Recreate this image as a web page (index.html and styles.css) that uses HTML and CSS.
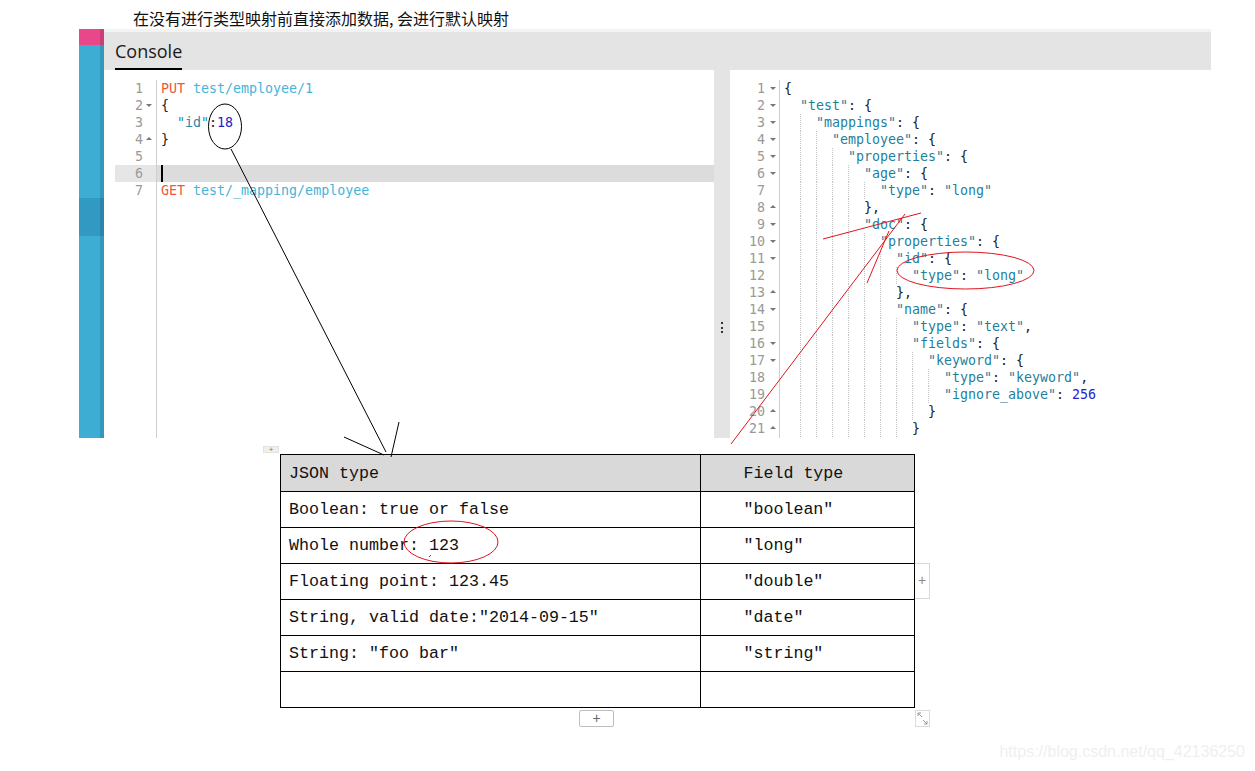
FILE: index.html
```html
<!DOCTYPE html>
<html lang="zh">
<head>
<meta charset="utf-8">
<title>Console</title>
<link rel="stylesheet" href="styles.css">
</head>
<body>
<div class="page">
  <div class="title">在没有进行类型映射前直接添加数据, 会进行默认映射</div>

  <div class="app">
    <div class="sidebar">
      <div class="sb-pink"></div>
      <div class="sb-blue sb-top"></div>
      <div class="sb-dark"></div>
      <div class="sb-blue sb-rest"></div>
    </div>
    <div class="content">
      <div class="header">
        <div class="tab">Console</div>
      </div>
      <div class="editors">
        <div class="editor left">
          <div class="gutter">
            <div class="ln">1</div>
            <div class="ln open">2</div>
            <div class="ln">3</div>
            <div class="ln close">4</div>
            <div class="ln">5</div>
            <div class="ln active">6</div>
            <div class="ln">7</div>
          </div>
          <div class="code">
            <div class="cl"><span class="m">PUT</span> <span class="u">test/employee/1</span></div>
            <div class="cl"><span class="p">{</span></div>
            <div class="cl"><span class="i"></span><span class="k">"id"</span><span class="p">:</span><span class="n">18</span></div>
            <div class="cl"><span class="p">}</span></div>
            <div class="cl"></div>
            <div class="cl active"><span class="cursor"></span></div>
            <div class="cl"><span class="m">GET</span> <span class="u">test/_mapping/employee</span></div>
          </div>
        </div>
        <div class="divider">
          <div class="grip"><span></span><span></span><span></span></div>
        </div>
        <div class="editor right">
          <div class="gutter">
            <div class="ln open">1</div>
            <div class="ln open">2</div>
            <div class="ln open">3</div>
            <div class="ln open">4</div>
            <div class="ln open">5</div>
            <div class="ln open">6</div>
            <div class="ln">7</div>
            <div class="ln close">8</div>
            <div class="ln open">9</div>
            <div class="ln open">10</div>
            <div class="ln open">11</div>
            <div class="ln">12</div>
            <div class="ln close">13</div>
            <div class="ln open">14</div>
            <div class="ln">15</div>
            <div class="ln open">16</div>
            <div class="ln open">17</div>
            <div class="ln">18</div>
            <div class="ln">19</div>
            <div class="ln close">20</div>
            <div class="ln close">21</div>
          </div>
          <div class="code">
            <div class="cl"><span class="p">{</span></div>
            <div class="cl"><span class="i"></span><span class="s">"test"</span><span class="p">: {</span></div>
            <div class="cl"><span class="i"></span><span class="g"></span><span class="s">"mappings"</span><span class="p">: {</span></div>
            <div class="cl"><span class="i"></span><span class="g"></span><span class="g"></span><span class="s">"employee"</span><span class="p">: {</span></div>
            <div class="cl"><span class="i"></span><span class="g"></span><span class="g"></span><span class="g"></span><span class="s">"properties"</span><span class="p">: {</span></div>
            <div class="cl"><span class="i"></span><span class="g"></span><span class="g"></span><span class="g"></span><span class="g"></span><span class="s">"age"</span><span class="p">: {</span></div>
            <div class="cl"><span class="i"></span><span class="g"></span><span class="g"></span><span class="g"></span><span class="g"></span><span class="g"></span><span class="s">"type"</span><span class="p">: </span><span class="s">"long"</span></div>
            <div class="cl"><span class="i"></span><span class="g"></span><span class="g"></span><span class="g"></span><span class="g"></span><span class="p">},</span></div>
            <div class="cl"><span class="i"></span><span class="g"></span><span class="g"></span><span class="g"></span><span class="g"></span><span class="s">"doc"</span><span class="p">: {</span></div>
            <div class="cl"><span class="i"></span><span class="g"></span><span class="g"></span><span class="g"></span><span class="g"></span><span class="g"></span><span class="s">"properties"</span><span class="p">: {</span></div>
            <div class="cl"><span class="i"></span><span class="g"></span><span class="g"></span><span class="g"></span><span class="g"></span><span class="g"></span><span class="g"></span><span class="s">"id"</span><span class="p">: {</span></div>
            <div class="cl"><span class="i"></span><span class="g"></span><span class="g"></span><span class="g"></span><span class="g"></span><span class="g"></span><span class="g"></span><span class="g"></span><span class="s">"type"</span><span class="p">: </span><span class="s">"long"</span></div>
            <div class="cl"><span class="i"></span><span class="g"></span><span class="g"></span><span class="g"></span><span class="g"></span><span class="g"></span><span class="g"></span><span class="p">},</span></div>
            <div class="cl"><span class="i"></span><span class="g"></span><span class="g"></span><span class="g"></span><span class="g"></span><span class="g"></span><span class="g"></span><span class="s">"name"</span><span class="p">: {</span></div>
            <div class="cl"><span class="i"></span><span class="g"></span><span class="g"></span><span class="g"></span><span class="g"></span><span class="g"></span><span class="g"></span><span class="g"></span><span class="s">"type"</span><span class="p">: </span><span class="s">"text"</span><span class="p">,</span></div>
            <div class="cl"><span class="i"></span><span class="g"></span><span class="g"></span><span class="g"></span><span class="g"></span><span class="g"></span><span class="g"></span><span class="g"></span><span class="s">"fields"</span><span class="p">: {</span></div>
            <div class="cl"><span class="i"></span><span class="g"></span><span class="g"></span><span class="g"></span><span class="g"></span><span class="g"></span><span class="g"></span><span class="g"></span><span class="g"></span><span class="s">"keyword"</span><span class="p">: {</span></div>
            <div class="cl"><span class="i"></span><span class="g"></span><span class="g"></span><span class="g"></span><span class="g"></span><span class="g"></span><span class="g"></span><span class="g"></span><span class="g"></span><span class="g"></span><span class="s">"type"</span><span class="p">: </span><span class="s">"keyword"</span><span class="p">,</span></div>
            <div class="cl"><span class="i"></span><span class="g"></span><span class="g"></span><span class="g"></span><span class="g"></span><span class="g"></span><span class="g"></span><span class="g"></span><span class="g"></span><span class="g"></span><span class="s">"ignore_above"</span><span class="p">: </span><span class="n">256</span></div>
            <div class="cl"><span class="i"></span><span class="g"></span><span class="g"></span><span class="g"></span><span class="g"></span><span class="g"></span><span class="g"></span><span class="g"></span><span class="g"></span><span class="p">}</span></div>
            <div class="cl"><span class="i"></span><span class="g"></span><span class="g"></span><span class="g"></span><span class="g"></span><span class="g"></span><span class="g"></span><span class="g"></span><span class="p">}</span></div>
          </div>
        </div>
      </div>
    </div>
  </div>

  <div class="table-wrap">
    <div class="handle"><span>+</span></div>
    <table class="types">
      <tr class="head"><td class="c1">JSON type</td><td class="c2">Field type</td></tr>
      <tr><td class="c1">Boolean: true or false</td><td class="c2">"boolean"</td></tr>
      <tr><td class="c1">Whole number: 123</td><td class="c2">"long"</td></tr>
      <tr><td class="c1">Floating point: 123.45</td><td class="c2">"double"</td></tr>
      <tr><td class="c1">String, valid date:"2014-09-15"</td><td class="c2">"date"</td></tr>
      <tr><td class="c1">String: "foo bar"</td><td class="c2">"string"</td></tr>
      <tr><td class="c1"></td><td class="c2"></td></tr>
    </table>
    <div class="add-col">+</div>
    <div class="add-row">+</div>
    <div class="resize">
      <svg width="13" height="15" viewBox="0 0 13 15">
        <path d="M2 2 L6 6 M2 2 L2 5 M2 2 L5 2" stroke="#999" stroke-width="1" fill="none"/>
        <path d="M11 13 L7 9 M11 13 L11 10 M11 13 L8 13" stroke="#999" stroke-width="1" fill="none"/>
      </svg>
    </div>
  </div>

  <div class="watermark">https://blog.csdn.net/qq_42136250</div>

  <svg class="annot" width="1255" height="771" viewBox="0 0 1255 771">
    <ellipse cx="225" cy="126.5" rx="16.5" ry="22.5" fill="none" stroke="#000" stroke-width="1"/>
    <line x1="231" y1="149" x2="386" y2="452" stroke="#000" stroke-width="1"/>
    <line x1="344" y1="437" x2="384" y2="455" stroke="#000" stroke-width="1"/>
    <line x1="399" y1="422" x2="391" y2="457" stroke="#000" stroke-width="1"/>
    <ellipse cx="965.5" cy="270.5" rx="68.5" ry="18.5" fill="none" stroke="#e0141e" stroke-width="1"/>
    <ellipse cx="451" cy="542" rx="47" ry="21" fill="none" stroke="#e0141e" stroke-width="1"/>
    <line x1="823" y1="239" x2="921" y2="213" stroke="#e0141e" stroke-width="1"/>
    <line x1="905" y1="214" x2="731" y2="444" stroke="#e0141e" stroke-width="1"/>
    <line x1="889" y1="231" x2="867" y2="283" stroke="#e0141e" stroke-width="1"/>
    <line x1="429" y1="557" x2="431" y2="555" stroke="#e0141e" stroke-width="1"/>
  </svg>
</div>
</body>
</html>
```

FILE: styles.css
```css
* { box-sizing: border-box; }

html, body {
  margin: 0;
  padding: 0;
  background: #fff;
}

.page {
  position: relative;
  width: 1255px;
  height: 771px;
  overflow: hidden;
  font-family: "Liberation Sans", Arial, sans-serif;
}

.title {
  height: 29px;
  padding: 6px 0 0 133px;
  line-height: 24px;
  font-size: 16px;
  color: #111;
  font-family: "Noto Sans CJK SC", "Noto Sans", sans-serif;
  white-space: nowrap;
}

.app {
  display: flex;
  margin-left: 79px;
  width: 1132px;
  height: 409px;
}

.sidebar {
  width: 25px;
  display: flex;
  flex-direction: column;
  position: relative;
}

.sidebar > div { width: 100%; }
.sb-pink { height: 16px; background: #e8488a; }
.sb-blue { background: #3dadd3; }
.sb-top { height: 153px; }
.sb-dark { height: 38px; background: #3199c2; }
.sb-rest { flex: 1; }
.sidebar::after {
  content: "";
  position: absolute;
  top: 0; right: 0; bottom: 0;
  width: 4px;
  background: rgba(0, 0, 0, 0.12);
}

.content {
  width: 1107px;
  display: flex;
  flex-direction: column;
}

.header {
  height: 41px;
  background: #e4e4e4;
  border-top: 3px solid #f3f3f3;
  padding-left: 11px;
  display: flex;
}

.tab {
  font-family: "Open Sans", "Noto Sans", sans-serif;
  font-size: 18px;
  line-height: 24px;
  color: #1a1a1a;
  padding: 7px 0 5px;
  border-bottom: 2px solid #000;
}

.editors {
  display: flex;
  height: 368px;
}

.editor {
  display: flex;
  background: #fff;
  padding-top: 10px;
  overflow: hidden;
  font-family: "DejaVu Sans Mono", "Liberation Mono", monospace;
  font-size: 13.3px;
  line-height: 17px;
}

.editor.left { width: 610px; padding-left: 11px; }
.editor.right { width: 481px; }

.gutter {
  flex: none;
  border-right: 1px solid #cfcfcf;
  color: #999;
  text-align: right;
}
.left .gutter { width: 42px; }
.right .gutter { width: 50px; }

.ln {
  position: relative;
  height: 17px;
  padding-right: 13px;
}
.right .ln { padding-right: 14px; }

.ln.active { background: #e6e6e6; }

.ln.open::after,
.ln.close::after {
  content: "";
  position: absolute;
  right: 4px;
  top: 7px;
  border-left: 3px solid transparent;
  border-right: 3px solid transparent;
}
.right .ln.open::after,
.right .ln.close::after { right: 3px; }
.ln.open::after { border-top: 3px solid #777; }
.ln.close::after { border-bottom: 3px solid #777; top: 6px; }

.code {
  flex: 1;
  color: #222;
}
.code .cl {
  height: 17px;
  padding-left: 4px;
  white-space: pre;
}
.code .cl.active { background: #dcdcdc; }

.cursor {
  display: inline-block;
  width: 2px;
  height: 17px;
  background: #000;
  vertical-align: top;
}

.i, .g {
  display: inline-block;
  width: 16px;
  height: 17px;
  vertical-align: top;
}
.g { border-left: 1px dotted #c4c4c4; }

.m { color: #f0563e; }
.u { color: #45b4da; }
.k { color: #2a88a8; }
.s { color: #1f7fa0; }
.p { color: #222; }
.n { color: #2222cc; }

.divider {
  width: 16px;
  background: #e4e4e4;
  padding-top: 252px;
  display: flex;
  justify-content: center;
}
.grip {
  display: flex;
  flex-direction: column;
  gap: 2.5px;
}
.grip span {
  display: block;
  width: 2px;
  height: 2px;
  background: #333;
}

.table-wrap {
  position: relative;
  margin: 16px 0 0 280px;
  width: 635px;
}

.types {
  border-collapse: collapse;
  width: 635px;
  font-family: "Liberation Mono", "Courier New", monospace;
  font-size: 16.67px;
  color: #111;
}
.types td {
  border: 1px solid #000;
  height: 36px;
  padding: 0;
  vertical-align: middle;
  white-space: pre;
}
.types tr.head td { background: #d9d9d9; height: 37px; }
.types .c1 { width: 421px; padding-left: 8px; }
.types .c2 { width: 214px; padding-left: 42px; }

.handle {
  position: absolute;
  left: -17px;
  top: -8px;
  width: 16px;
  height: 7px;
  background: #efefef;
  border: 1px solid #e2e2e2;
  font-size: 8px;
  line-height: 5px;
  color: #777;
  text-align: center;
}

.add-col {
  position: absolute;
  left: 635px;
  top: 109px;
  width: 15px;
  height: 36px;
  border: 1px solid #d8d8d8;
  border-left: none;
  background: #fff;
  color: #8a8a8a;
  font-size: 14px;
  line-height: 33px;
  text-align: center;
}

.add-row {
  position: absolute;
  left: 299px;
  top: 256px;
  width: 35px;
  height: 17px;
  border: 1px solid #bdbdbd;
  border-radius: 2px;
  background: #fff;
  color: #666;
  font-size: 14px;
  line-height: 14px;
  text-align: center;
}

.resize {
  position: absolute;
  left: 635px;
  top: 256px;
  width: 15px;
  height: 17px;
  border: 1px solid #dadada;
  background: #fff;
}
.resize svg { display: block; }

.watermark {
  position: absolute;
  right: 10px;
  top: 741px;
  font-family: "Liberation Sans", Arial, sans-serif;
  font-size: 16px;
  line-height: 22px;
  color: #efefef;
  white-space: nowrap;
}

.annot {
  position: absolute;
  left: 0;
  top: 0;
  pointer-events: none;
}
```
